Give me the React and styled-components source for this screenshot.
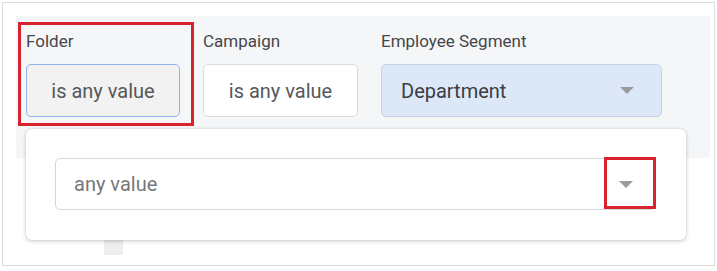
import React from "react";
import styled, { createGlobalStyle } from "styled-components";

const Global = createGlobalStyle`
  html, body { margin: 0; padding: 0; background: #ffffff; }
  body { font-family: Roboto, "Noto Sans", Arial, sans-serif; }
  * { box-sizing: border-box; }
`;

const Frame = styled.div`
  position: relative;
  margin: 2px 0 0 2px;
  width: 713px;
  height: 264px;
  border: 1px solid #dcdcdc;
  padding: 13px 0 0 13px;
`;

const Panel = styled.div`
  position: relative;
  width: 694px;
  height: 142px;
  background: #f5f6f8;
  display: flex;
  gap: 23px;
  padding: 15px 0 0 10px;
`;

const Filter = styled.div`
  display: flex;
  flex-direction: column;
  gap: 12px;
`;

const Label = styled.div`
  font-size: 17px;
  line-height: 21px;
  color: #45474b;
`;

const Pill = styled.div`
  width: ${(p) => p.$w}px;
  height: 53px;
  border-radius: 5px;
  border: 1px solid ${(p) => p.$border};
  background: ${(p) => p.$bg};
  display: flex;
  align-items: center;
  justify-content: ${(p) => (p.$left ? "space-between" : "center")};
  padding: ${(p) => (p.$left ? "0 27px 0 19px" : "0")};
  font-size: 20px;
  color: ${(p) => p.$color || "#55585c"};
`;

const Caret = styled.span`
  width: 0;
  height: 0;
  border-left: 7px solid transparent;
  border-right: 7px solid transparent;
  border-top: 7px solid #9a9b9d;
`;

const Highlight = styled.div`
  position: absolute;
  left: ${(p) => p.$x}px;
  top: ${(p) => p.$y}px;
  width: ${(p) => p.$w}px;
  height: ${(p) => p.$h}px;
  border: 3px solid #d8232f;
  pointer-events: none;
  z-index: 3;
`;

const Stub = styled.div`
  width: 19px;
  height: 15px;
  margin: 82px 0 0 88px;
  background: #eceef0;
`;

const Popup = styled.div`
  position: absolute;
  left: 23px;
  top: 126px;
  width: 660px;
  height: 111px;
  background: #ffffff;
  border-radius: 6px;
  box-shadow: 0 1px 4px rgba(0, 0, 0, 0.22), 0 0 1px rgba(0, 0, 0, 0.12);
  padding: 29px 0 0 29px;
  z-index: 2;
`;

const Select = styled.div`
  width: 600px;
  height: 52px;
  border: 1px solid #d6d7d9;
  border-radius: 5px;
  display: flex;
  align-items: center;
  justify-content: space-between;
  padding: 0 21px 0 18px;
  font-size: 20px;
  color: #76787b;
`;

export default function App() {
  return (
    <>
      <Global />
      <Frame>
        <Panel>
          <Filter>
            <Label>Folder</Label>
            <Pill $w={154} $bg="#f2f2f2" $border="#8fb4ee">is any value</Pill>
          </Filter>
          <Filter>
            <Label>Campaign</Label>
            <Pill $w={155} $bg="#ffffff" $border="#dadcdf">is any value</Pill>
          </Filter>
          <Filter>
            <Label>Employee Segment</Label>
            <Pill $w={281} $bg="#dce8f8" $border="#c6d3e4" $color="#3a3d41" $left>
              Department
              <Caret />
            </Pill>
          </Filter>
          <Highlight $x={2} $y={6} $w={176} $h={104} />
        </Panel>
        <Stub />
        <Popup>
          <Select>
            any value
            <Caret />
          </Select>
        </Popup>
        <Highlight $x={601} $y={154} $w={52} $h={52} />
      </Frame>
    </>
  );
}
